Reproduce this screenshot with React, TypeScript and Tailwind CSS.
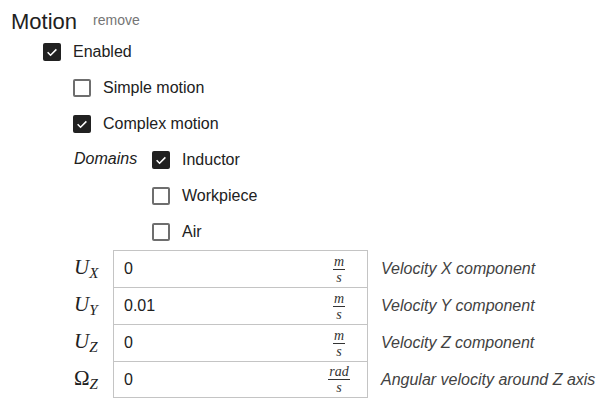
import React from "react";

const Check = ({ checked }: { checked: boolean }) =>
  checked ? (
    <span className="w-[18px] h-[18px] rounded-[2px] bg-[#212121] flex items-center justify-center shrink-0">
      <svg width="14" height="14" viewBox="0 0 24 24">
        <path d="M4.5 12.5l5 5L19.5 7.5" fill="none" stroke="white" strokeWidth="2.6" />
      </svg>
    </span>
  ) : (
    <span className="w-[18px] h-[18px] rounded-[2px] border-2 border-[#6e6e6e] shrink-0" />
  );

const Row = ({ checked, label, className = "" }: { checked: boolean; label: string; className?: string }) => (
  <div className={"h-9 flex items-center gap-3 " + className}>
    <Check checked={checked} />
    <span className="text-[16px] text-[#212121]">{label}</span>
  </div>
);

const math = { fontFamily: '"Liberation Serif", "DejaVu Serif", serif' } as React.CSSProperties;

const Sym = ({ base, sub, upright }: { base: string; sub: string; upright?: boolean }) => (
  <span className="text-[21px] text-[#212121] leading-none" style={math}>
    <span className={upright ? "" : "italic"}>{base}</span>
    <span className="italic text-[15px] relative top-[4px]">{sub}</span>
  </span>
);

const Frac = ({ num }: { num: string }) => (
  <span className="flex flex-col items-center text-[14px] leading-[13px] text-[#333] italic" style={math}>
    <span className="px-[1px]">{num}</span>
    <span className="self-stretch h-px bg-[#333] my-[1px]" />
    <span>s</span>
  </span>
);

const rows = [
  { base: "U", sub: "X", value: "0", num: "m", desc: "Velocity X component" },
  { base: "U", sub: "Y", value: "0.01", num: "m", desc: "Velocity Y component" },
  { base: "U", sub: "Z", value: "0", num: "m", desc: "Velocity Z component" },
  { base: "Ω", sub: "Z", value: "0", num: "rad", desc: "Angular velocity around Z axis", upright: true },
];

export default function App() {
  return (
    <div className="w-[603px] h-[407px] bg-white pl-[11px] pt-[8px]" style={{ fontFamily: '"Liberation Sans", Arial, sans-serif' }}>
      <div className="h-[26px] flex items-center gap-4">
        <span className="text-[22px] text-[#212121]">Motion</span>
        <span className="text-[14px] text-[#757575] relative top-[-1px]">remove</span>
      </div>
      <div className="pl-[32px]">
        <Row checked label="Enabled" />
        <div className="pl-[30px]">
          <Row checked={false} label="Simple motion" />
          <Row checked label="Complex motion" />
          <div className="flex">
            <div className="w-[79px] h-9 flex items-center pl-[1px]">
              <span className="italic text-[16px] text-[#212121] relative top-[-1px]">Domains</span>
            </div>
            <div>
              <Row checked label="Inductor" />
              <Row checked={false} label="Workpiece" />
              <Row checked={false} label="Air" />
            </div>
          </div>
        </div>
      </div>
      <div className="pl-[62px]">
        {rows.map((r, i) => (
          <div key={i} className="flex h-[37px] items-center">
            <div className="w-[40px] pl-[1px]">
              <Sym base={r.base} sub={r.sub} upright={r.upright} />
            </div>
            <div
              className={
                "w-[255px] h-full border-x border-t border-[#c4c4c4] flex items-center pl-[10px] pr-[12px] " +
                (i === rows.length - 1 ? "border-b" : "")
              }
            >
              <span className="flex-1 text-[16px] text-[#212121]">{r.value}</span>
              <span className="w-[32px] flex justify-center">
                <Frac num={r.num} />
              </span>
            </div>
            <span className="pl-[13px] italic text-[16px] text-[#424242]">{r.desc}</span>
          </div>
        ))}
      </div>
    </div>
  );
}
